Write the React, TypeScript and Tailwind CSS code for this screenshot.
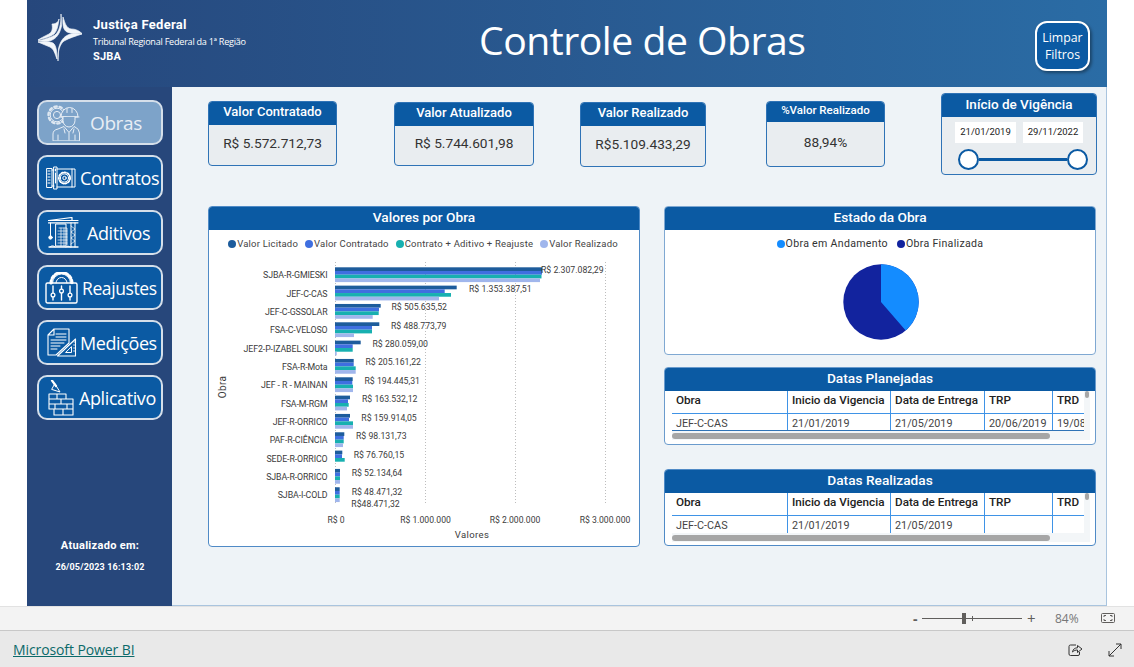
import React from "react";

const din = "font-['Roboto',sans-serif]";
const seg = "font-['Open_Sans',sans-serif]";

const Logo = () => (
  <svg width="44" height="47" viewBox="0 0 44 47" className="ml-[11px] mt-[14px] shrink-0" fill="#f2f6fa" stroke="#f2f6fa" strokeWidth="0.7" strokeLinejoin="round">
    <path d="M23 0 C23.5 10 21 18 17 21 C12 24 6 25 0 27 C5 27.5 11 28 15 25.5 C20 23 22.5 17 23.5 12 Z" />
    <path d="M14 10 C15 15 14 18 11 20 C6 22.5 3 24 0 26 C6 24 12 23 16 20 C19 17 20 12 21 5 C20 9 17 10 14 10Z" />
    <path d="M20 47 C19.5 37 22 30 26 27 C31 24 38 22 44 20 C39 19.5 33 19 29 21.5 C24 24 21.5 30 20.5 35 Z" />
    <path d="M25 3 C24.5 10 25 16 29 18 C33 20 39 19 44 19.5 C40 16 37 15 33 15 C28 14 27 9 25 3Z" />
    <path d="M0 28 C5 28 11 27 15 29 C18 31 19 37 19 45 C17 40 16 35 12 33 C8 31 4 30 0 28Z" />
  </svg>
);

const I = ({ w, h, vb, children, cls }: { w: number; h: number; vb: string; children: React.ReactNode; cls?: string }) => (
  <svg width={w} height={h} viewBox={vb} fill="none" stroke="currentColor" strokeWidth="1" strokeLinejoin="round" strokeLinecap="round" className={"shrink-0 " + (cls || "")}>
    {children}
  </svg>
);

const ObrasIcon = () => (
  <I w={34} h={36} vb="0 0 34 36">
    <circle cx="11" cy="10" r="8.5" strokeWidth="2.4" strokeDasharray="2.4 2.9" opacity="0.9" />
    <circle cx="11" cy="10" r="6.8" />
    <circle cx="11" cy="10" r="3.6" />
    <path d="M15 11.5 a8.5 9 0 0 1 17 0 Z" fill="#7da3c9" />
    <path d="M21 3.5 v4 M26 3.5 v4 M14 12 H33" />
    <path d="M17 12 v3.5 a6 6.5 0 0 0 12 0 V12" fill="#7da3c9" />
    <path d="M7 35.5 v-6.5 q0 -4 5 -5 l6 -2.5 l5 6 l5 -6 l0 0 l1 .5 q4 1.5 4.5 6 v7.5 Z" fill="#7da3c9" />
    <path d="M12 35 v-5 M29 35 v-5 M23 28 v7 M18 24 l1 4 M28 24 l-1 4" />
  </I>
);
const ContratosIcon = () => (
  <I w={30} h={24} vb="0 0 30 24">
    <path d="M1 2.5 H6 V21.5 H1 Z M6 4 H8 M6 20 H8" />
    <path d="M2 5 h2 M2 8 h2 M2 11 h2 M2 14 h2 M2 17 h2" />
    <path d="M8 1 h3 v22 h-3 Z" />
    <path d="M9.5 3 v2 M9.5 7 v10" />
    <path d="M11 3 H29 V21 H11" />
    <path d="M26 3 V21" />
    <circle cx="18.5" cy="12" r="5.6" strokeWidth="1.8" strokeDasharray="1.6 1.6" />
    <circle cx="18.5" cy="12" r="4.1" />
    <circle cx="18.5" cy="12" r="1.7" />
  </I>
);
const AditivosIcon = () => (
  <I w={31} h={31} vb="0 0 31 31">
    <path d="M0.5 3.5 H30 M0.5 5.8 H30 M1 3.5 L24 0.5 M24 0.5 v3" strokeWidth="1.2" />
    <path d="M23 5.8 V30 M27 5.8 V30" />
    <path d="M23 9 l4 3 l-4 3 l4 3 l-4 3 l4 3 l-4 3" strokeWidth="0.7" />
    <path d="M2.5 6 V19" />
    <circle cx="2.5" cy="20.5" r="1.7" fill="currentColor" />
    <path d="M8 7 h10 v22 h-10 Z" />
    <path d="M11 11 h8 v17 M10 14 h9 M10 17 h9 M10 20 h9 M10 23 h9 M10 26 h9 M13 11 v18 M16 11 v18" strokeWidth="0.7" />
    <path d="M1 30 H30" strokeWidth="1.4" />
    <path d="M2 30 a3 3 0 0 1 5 0 M18 30 a2.5 2.5 0 0 1 4 0" />
  </I>
);
const ReajustesIcon = () => (
  <I w={33} h={32} vb="0 0 33 32">
    <path d="M6 11 a10.5 10.5 0 0 1 21 0" strokeWidth="3" strokeDasharray="2.6 2.4" />
    <path d="M7.5 11 a9 9 0 0 1 18 0" />
    <path d="M11 11 a5.5 5.5 0 0 1 11 0" />
    <rect x="1" y="11" width="31" height="20" rx="1.5" strokeWidth="1.4" />
    <path d="M8 14 V28 M16.5 14 V28 M25 14 V28" strokeWidth="1.4" />
    <circle cx="8" cy="23" r="1.9" fill="#0b5aa3" strokeWidth="1.3" />
    <circle cx="16.5" cy="19" r="1.9" fill="#0b5aa3" strokeWidth="1.3" />
    <circle cx="25" cy="23" r="1.9" fill="#0b5aa3" strokeWidth="1.3" />
  </I>
);
const MedicoesIcon = () => (
  <I w={30} h={29} vb="0 0 30 29">
    <path d="M7 1 H22 V15 L9 27 H1 V7 Z M1 7 H7 V1" strokeWidth="1.1" />
    <path d="M9 6 H19 M9 9 H19 M4 12 H19 M4 15 H17 M4 18 H13 M4 21 H10" strokeWidth="1" />
    <path d="M28.5 11 V28 H10.5 Z" strokeWidth="1.1" />
    <path d="M24.5 19 V24.5 H19 Z" />
    <path d="M27 14 h1.5 M26.5 17 h2 M26.5 20 h2 M26.5 23 h2" strokeWidth="0.8" />
  </I>
);
const AplicativoIcon = () => (
  <I w={26} h={36} vb="0 0 26 36">
    <path d="M4 0.5 L8 6" strokeWidth="2.2" />
    <path d="M7 4 L12 12 L4 9.5 Z" />
    <path d="M1 14 H18 V19 H1 Z M9 14 V19 M1 19 H25 V24 H1 Z M13 19 V24 M1 24 H25 V29 H1 Z M7 24 V29 M19 24 V29 M6 29 H25 V35 H6 Z M15 29 V35" strokeWidth="1.1" />
  </I>
);

const nav = [
  { t: "Obras", icon: <ObrasIcon />, box: "bg-[#7da3c9] text-[#e8eef5] pl-[7px]", txt: "ml-[10px] text-[19px] mt-[2px]" },
  { t: "Contratos", icon: <ContratosIcon />, box: "bg-[#0b5aa3] text-white pl-[7px]", txt: "ml-[4px] text-[18px] mt-[2px]" },
  { t: "Aditivos", icon: <AditivosIcon />, box: "bg-[#0b5aa3] text-white pl-[9px]", txt: "ml-[8px] text-[18px] mt-[2px]" },
  { t: "Reajustes", icon: <ReajustesIcon />, box: "bg-[#0b5aa3] text-white pl-[6px]", txt: "ml-[4px] text-[17.5px] mt-[2px]" },
  { t: "Medições", icon: <MedicoesIcon />, box: "bg-[#0b5aa3] text-white pl-[8px]", txt: "ml-[3px] text-[18px] mt-[2px]" },
  { t: "Aplicativo", icon: <AplicativoIcon />, box: "bg-[#0b5aa3] text-white pl-[9px]", txt: "ml-[5px] text-[18px] mt-[2px]" },
];

const StatCard = ({ title, value, cls, head, titleCls }: { title: string; value: string; cls: string; head: string; titleCls?: string }) => (
  <div className={"shrink-0 flex flex-col rounded-[4px] border border-[#2f73b6] bg-[#e9edf0] overflow-hidden " + cls}>
    <div className={"bg-[#0b5aa3] text-white flex items-center justify-center font-medium pb-[3px] " + din + " " + head + " " + (titleCls || "text-[13px]")}>{title}</div>
    <div className={"flex-1 flex items-center justify-center text-[13.7px] pb-[4px] text-[#333333] " + din}>{value}</div>
  </div>
);

const Panel = ({ title, cls, children }: { title: string; cls: string; children: React.ReactNode }) => (
  <div className={"flex flex-col rounded-[4px] border border-[#4f8ac6] bg-white overflow-hidden shrink-0 " + cls}>
    <div className={"h-[23px] shrink-0 bg-[#0b5aa3] text-white flex items-center justify-center text-[13.7px] font-medium pb-[2px] " + din}>{title}</div>
    {children}
  </div>
);

const Dot = ({ c, t, cls }: { c: string; t: string; cls?: string }) => (
  <div className={"flex items-center " + (cls || "")}>
    <span className="w-[8px] h-[8px] rounded-full mr-[1px]" style={{ background: c }} />
    <span>{t}</span>
  </div>
);

const rows: { n: string; w: number[]; l: string; lx: number; ly: number }[] = [
  { n: "SJBA-R-GMIESKI", w: [207, 207, 206.5, 205], l: "R$ 2.307.082,29", lx: 541, ly: 271 },
  { n: "JEF-C-CAS", w: [121.7, 109.7, 116, 104], l: "R$ 1.353.387,51", lx: 469, ly: 290 },
  { n: "JEF-C-GSSOLAR", w: [45.7, 44, 43.7, 37.7], l: "R$ 505.635,52", lx: 391.5, ly: 308 },
  { n: "FSA-C-VELOSO", w: [44.3, 37, 37, 19], l: "R$ 488.773,79", lx: 391, ly: 327 },
  { n: "JEF2-P-IZABEL SOUKI", w: [25.7, 17.7, 17.7, 1.7], l: "R$ 280.059,00", lx: 372.5, ly: 345 },
  { n: "FSA-R-Mota", w: [18.7, 18.7, 20.7, 20.7], l: "R$ 205.161,22", lx: 365.5, ly: 363 },
  { n: "JEF - R - MAINAN", w: [17.7, 17.3, 18, 18], l: "R$ 194.445,31", lx: 364.5, ly: 382 },
  { n: "FSA-M-RGM", w: [15, 13, 13.7, 12], l: "R$ 163.532,12", lx: 362, ly: 400 },
  { n: "JEF-R-ORRICO", w: [15, 14, 18, 18], l: "R$ 159.914,05", lx: 361.3, ly: 419 },
  { n: "PAF-R-CIÊNCIA", w: [9.3, 8.7, 8.7, 8], l: "R$ 98.131,73", lx: 356, ly: 437 },
  { n: "SEDE-R-ORRICO", w: [7.3, 7, 9.7, 0], l: "R$ 76.760,15", lx: 353.7, ly: 456 },
  { n: "SJBA-R-ORRICO", w: [5, 5, 5, 5], l: "R$ 52.134,64", lx: 351.7, ly: 474 },
  { n: "SJBA-I-COLD", w: [4.7, 4.7, 4.7, 4.7], l: "R$ 48.471,32", lx: 351.7, ly: 493 },
];
const barColors = ["#1d5c9c", "#3f6fe0", "#17b0b0", "#a0b6ec"];

const Chart = () => (
  <svg width="430" height="285" viewBox="209 261 430 285" className="block">
    <g fontFamily="Roboto, sans-serif" fontSize="8.8" fill="#3c3c3c">
      {[335, 425, 515, 605].map((x) => (
        <line key={x} x1={x + 0.5} x2={x + 0.5} y1="263" y2="506" stroke="#bdbdbd" strokeDasharray="1 2" />
      ))}
      {rows.map((r, i) => {
        const y0 = 268.3 + i * 18.33;
        return (
          <g key={r.n}>
            {r.w.map((w, j) => (
              <rect key={j} x="335" y={y0 + j * 3.7} width={w} height="3.7" fill={barColors[j]} />
            ))}
            <text x="327.5" y={y0 + 11} textAnchor="end" letterSpacing="-0.1">{r.n}</text>
            <text x={r.lx} y={r.ly + 3} fontSize="8.7">{r.l}</text>
          </g>
        );
      })}
      <text x="351.3" y="507.5" fontSize="8.7">R$48.471,32</text>
      <text x="336" y="523.5" textAnchor="middle" fontSize="8.6">R$ 0</text>
      <text x="425.5" y="523.5" textAnchor="middle" fontSize="8.6">R$ 1.000.000</text>
      <text x="515" y="523.5" textAnchor="middle" fontSize="8.6">R$ 2.000.000</text>
      <text x="605" y="523.5" textAnchor="middle" fontSize="8.6">R$ 3.000.000</text>
      <text x="472" y="539" textAnchor="middle" fontSize="9.5" letterSpacing="0.4">Valores</text>
      <text transform="translate(225.5 388) rotate(-90)" textAnchor="middle" fontSize="10" letterSpacing="0.4">Obra</text>
    </g>
  </svg>
);

const cols = ["Obra", "Inicio da Vigencia", "Data de Entrega", "TRP", "TRD"];
const gridCls = "grid grid-cols-[115px_103px_94px_68px_32px] w-[412px]";

const DataTable = ({ row, bottom }: { row: string[]; bottom: boolean }) => (
  <div className={"flex-1 relative flex flex-col pl-[7px] " + din}>
    <div className="flex flex-1">
      <div className="w-[412px] overflow-hidden bg-white">
        <div className={gridCls + " h-[23px] border-b border-[#3f93e6] text-[11.7px] font-medium text-[#222222]"}>
          {cols.map((c, i) => (
            <div key={c} className={"px-[4px] pt-[1px] whitespace-nowrap overflow-hidden leading-[16px] " + (i > 0 ? "border-l border-[#3f93e6]" : "")}>{c}</div>
          ))}
        </div>
        <div className={gridCls + " h-[17px] text-[10.8px] text-[#444444] " + (bottom ? "border-b border-[#2f73b6]" : "")}>
          {row.map((c, i) => (
            <div key={i} className={"px-[4px] whitespace-nowrap overflow-hidden leading-[20px] " + (i > 0 ? "border-l border-[#3f93e6]" : "")}>{c}</div>
          ))}
        </div>
      </div>
      <div className="w-[6px] bg-[#f3f6f8] relative">
        <div className="w-[4px] h-[7px] ml-[1px] bg-[#a6a6a6] rounded-[2px]" />
      </div>
    </div>
    <div className="h-[9px] w-[418px] bg-[#f3f6f8] pt-[1.5px] mb-[5px]">
      <div className="w-[378px] h-[6px] bg-[#a6a6a6] rounded-[3px]" />
    </div>
  </div>
);

export default function App() {
  return (
    <div className={"w-[1134px] h-[667px] overflow-hidden bg-white flex flex-col " + seg}>
      <div className="h-[606px] flex flex-col w-[1080px] ml-[27px]">
        <header className="h-[87px] shrink-0 flex bg-gradient-to-r from-[#26477c] to-[#2a6ca5]">
          <Logo />
          <div className="ml-[11px] mt-[16px] text-white w-[200px]">
            <div className={"text-[13px] font-bold leading-[18px] tracking-[0.3px] " + din}>Justiça Federal</div>
            <div className="text-[9.1px] leading-[14px] mt-[1px] tracking-[-0.25px] whitespace-nowrap">Tribunal Regional Federal da 1ª Região</div>
            <div className={"text-[11px] font-bold leading-[16px] tracking-[0.2px] " + din}>SJBA</div>
          </div>
          <h1 className="ml-[186px] mt-[13px] text-[39.2px] leading-[54px] text-white whitespace-nowrap w-[528px] tracking-[-0.5px]">Controle de Obras</h1>
          <button className="ml-[28px] mt-[21px] w-[55px] h-[50px] rounded-[12px] border-2 border-white bg-[#0b5aa3] text-white text-[12.3px] leading-[17px] shadow-[2px_2px_3px_rgba(0,0,0,0.35)]">
            Limpar<br />Filtros
          </button>
        </header>
        <div className="flex flex-1 min-h-0">
          <aside className="w-[145px] shrink-0 bg-[#27477b] flex flex-col pl-[10px] pt-[13px]">
            <nav className="flex flex-col gap-[10px]">
              {nav.map((n) => (
                <div key={n.t} className={"w-[126px] h-[45px] rounded-[10px] border-2 border-[#d5dfea] flex items-center overflow-hidden whitespace-nowrap tracking-[-0.4px] " + n.box}>
                  {n.icon}
                  <span className={n.txt}>{n.t}</span>
                </div>
              ))}
            </nav>
            <div className={"text-white font-bold text-center w-[126px] mt-[118px] " + din}>
              <div className="text-[11px] leading-[16px] tracking-[0.3px]">Atualizado em:</div>
              <div className="text-[9px] leading-[12px] mt-[7px] tracking-[0.15px]">26/05/2023 16:13:02</div>
            </div>
          </aside>
          <main className="flex-1 bg-[#eef3f7] border-r border-[#a9c4de] pl-[36px] border-b">
            <div className="flex items-start h-[88px]">
              <StatCard title="Valor Contratado" value="R$ 5.572.712,73" cls="mt-[14px] w-[129px] h-[65px]" head="h-[23px]" />
              <StatCard title="Valor Atualizado" value="R$ 5.744.601,98" cls="ml-[57px] mt-[15px] w-[140px] h-[64px]" head="h-[23px]" />
              <StatCard title="Valor Realizado" value="R$5.109.433,29" cls="ml-[46px] mt-[15px] w-[126px] h-[65px]" head="h-[23px]" />
              <StatCard title="%Valor Realizado" value="88,94%" cls="ml-[60px] mt-[14px] w-[119px] h-[66px]" head="h-[20px]" titleCls="text-[11.5px]" />
              <div className="ml-[56px] mt-[6px] w-[156px] h-[82px] shrink-0 flex flex-col rounded-[4px] border border-[#2f73b6] bg-[#e9edf0] overflow-hidden">
                <div className={"h-[23px] shrink-0 bg-[#0b5aa3] text-white flex items-center justify-center text-[13.5px] font-medium pb-[2px] " + din}>Início de Vigência</div>
                <div className={"flex gap-[7px] pl-[13px] pt-[5px] text-[9.5px] text-[#222222] " + din}>
                  <div className="w-[61px] h-[21px] bg-white flex items-center justify-center">21/01/2019</div>
                  <div className="w-[60px] h-[21px] bg-white flex items-center justify-center">29/11/2022</div>
                </div>
                <div className="flex items-center pl-[16px] mt-[6px] w-[146px]">
                  <span className="w-[21px] h-[21px] rounded-full border-2 border-[#0b5aa3] bg-white shrink-0" />
                  <span className="h-[3px] flex-1 bg-[#0b5aa3]" />
                  <span className="w-[21px] h-[21px] rounded-full border-2 border-[#0b5aa3] bg-white shrink-0" />
                </div>
              </div>
            </div>
            <div className="flex items-start mt-[31px]">
              <Panel title="Valores por Obra" cls="w-[432px] h-[341px]">
                <div className={"flex justify-center items-start gap-[7px] h-[30px] pt-[5px] pr-[2px] text-[9.5px] leading-[18px] text-[#444444] tracking-[0.2px] whitespace-nowrap " + din}>
                  <Dot c="#1d5c9c" t="Valor Licitado" />
                  <Dot c="#3f6fe0" t="Valor Contratado" />
                  <Dot c="#17b0b0" t="Contrato + Aditivo + Reajuste" />
                  <Dot c="#a0b6ec" t="Valor Realizado" />
                </div>
                <Chart />
              </Panel>
              <div className="ml-[24px] w-[432px] flex flex-col">
                <Panel title="Estado da Obra" cls="h-[149px] border-[#7fa8d2]">
                  <div className={"flex justify-center gap-[9px] pt-[5px] text-[10.6px] leading-[18px] text-[#333333] tracking-[0.3px] " + din}>
                    <Dot c="#148cff" t="Obra em Andamento" />
                    <Dot c="#12239e" t="Obra Finalizada" />
                  </div>
                  <svg width="76" height="76" viewBox="-38 -38 76 76" className="mt-[11px] ml-[178px]">
                    <circle r="37.7" fill="#12239e" />
                    <path d="M0 0 V-37.7 A37.7 37.7 0 0 1 24.7 28.5 Z" fill="#148cff" />
                  </svg>
                </Panel>
                <Panel title="Datas Planejadas" cls="h-[78px] mt-[12px] border-[#6a9bcd]">
                  <DataTable row={["JEF-C-CAS", "21/01/2019", "21/05/2019", "20/06/2019", "19/08/2019"]} bottom />
                </Panel>
                <Panel title="Datas Realizadas" cls="h-[77px] mt-[24px] border-[#4f8ac6]">
                  <DataTable row={["JEF-C-CAS", "21/01/2019", "21/05/2019", "", ""]} bottom={false} />
                </Panel>
              </div>
            </div>
          </main>
        </div>
      </div>
      <div className="h-[25px] shrink-0 bg-[#f3f3f3] border-t border-[#e2e2e2] border-b-[1px] border-b-[#c8c8c8] flex items-center text-[#605e5c]">
        <span className="ml-[913px] w-[9px] text-[14px] leading-none font-bold">-</span>
        <div className="relative w-[100px] h-[1px] bg-[#605e5c]">
          <span className="absolute left-[40px] top-[-5px] w-[4px] h-[11px] bg-[#605e5c]" />
          <span className="absolute left-[50px] top-[-2px] w-[1px] h-[5px] bg-[#605e5c]" />
        </div>
        <span className="ml-[5px] w-[20px] text-[15px] leading-none">+</span>
        <span className="ml-[8px] w-[30px] text-[12px] text-[#777777]">84%</span>
        <svg width="16" height="12" viewBox="0 0 16 12" fill="none" stroke="#605e5c" className="ml-[16px]">
          <rect x="0.5" y="0.5" width="13" height="9" rx="1" />
          <path d="M3 4 V2.5 H5 M9 2.5 H11 V4 M3 6 V7.5 H5 M9 7.5 H11 V6" />
        </svg>
      </div>
      <div className="flex-1 bg-[#e9e9e9] flex items-center pt-[1px]">
        <a className="ml-[13px] text-[14px] text-[#0b6a6a] underline tracking-[-0.1px]">Microsoft Power BI</a>
        <svg width="15" height="14" viewBox="0 0 15 14" fill="none" stroke="#333333" strokeWidth="1" className="ml-[934px]">
          <path d="M8 2 H2.5 a1.5 1.5 0 0 0 -1.5 1.5 V11 a1.5 1.5 0 0 0 1.5 1.5 H10 a1.5 1.5 0 0 0 1.5 -1.5 V9" />
          <path d="M4.5 9 C5 6 7 4.8 9.5 4.8 V2.5 L14 6 L9.5 9.5 V7 C7.5 7 6 7.5 4.5 9Z" />
        </svg>
        <svg width="14" height="14" viewBox="0 0 14 14" fill="none" stroke="#333333" strokeWidth="1" className="ml-[25px]">
          <path d="M1 13 L13 1 M8 1 H13 V6 M1 8 V13 H6" />
        </svg>
      </div>
    </div>
  );
}
